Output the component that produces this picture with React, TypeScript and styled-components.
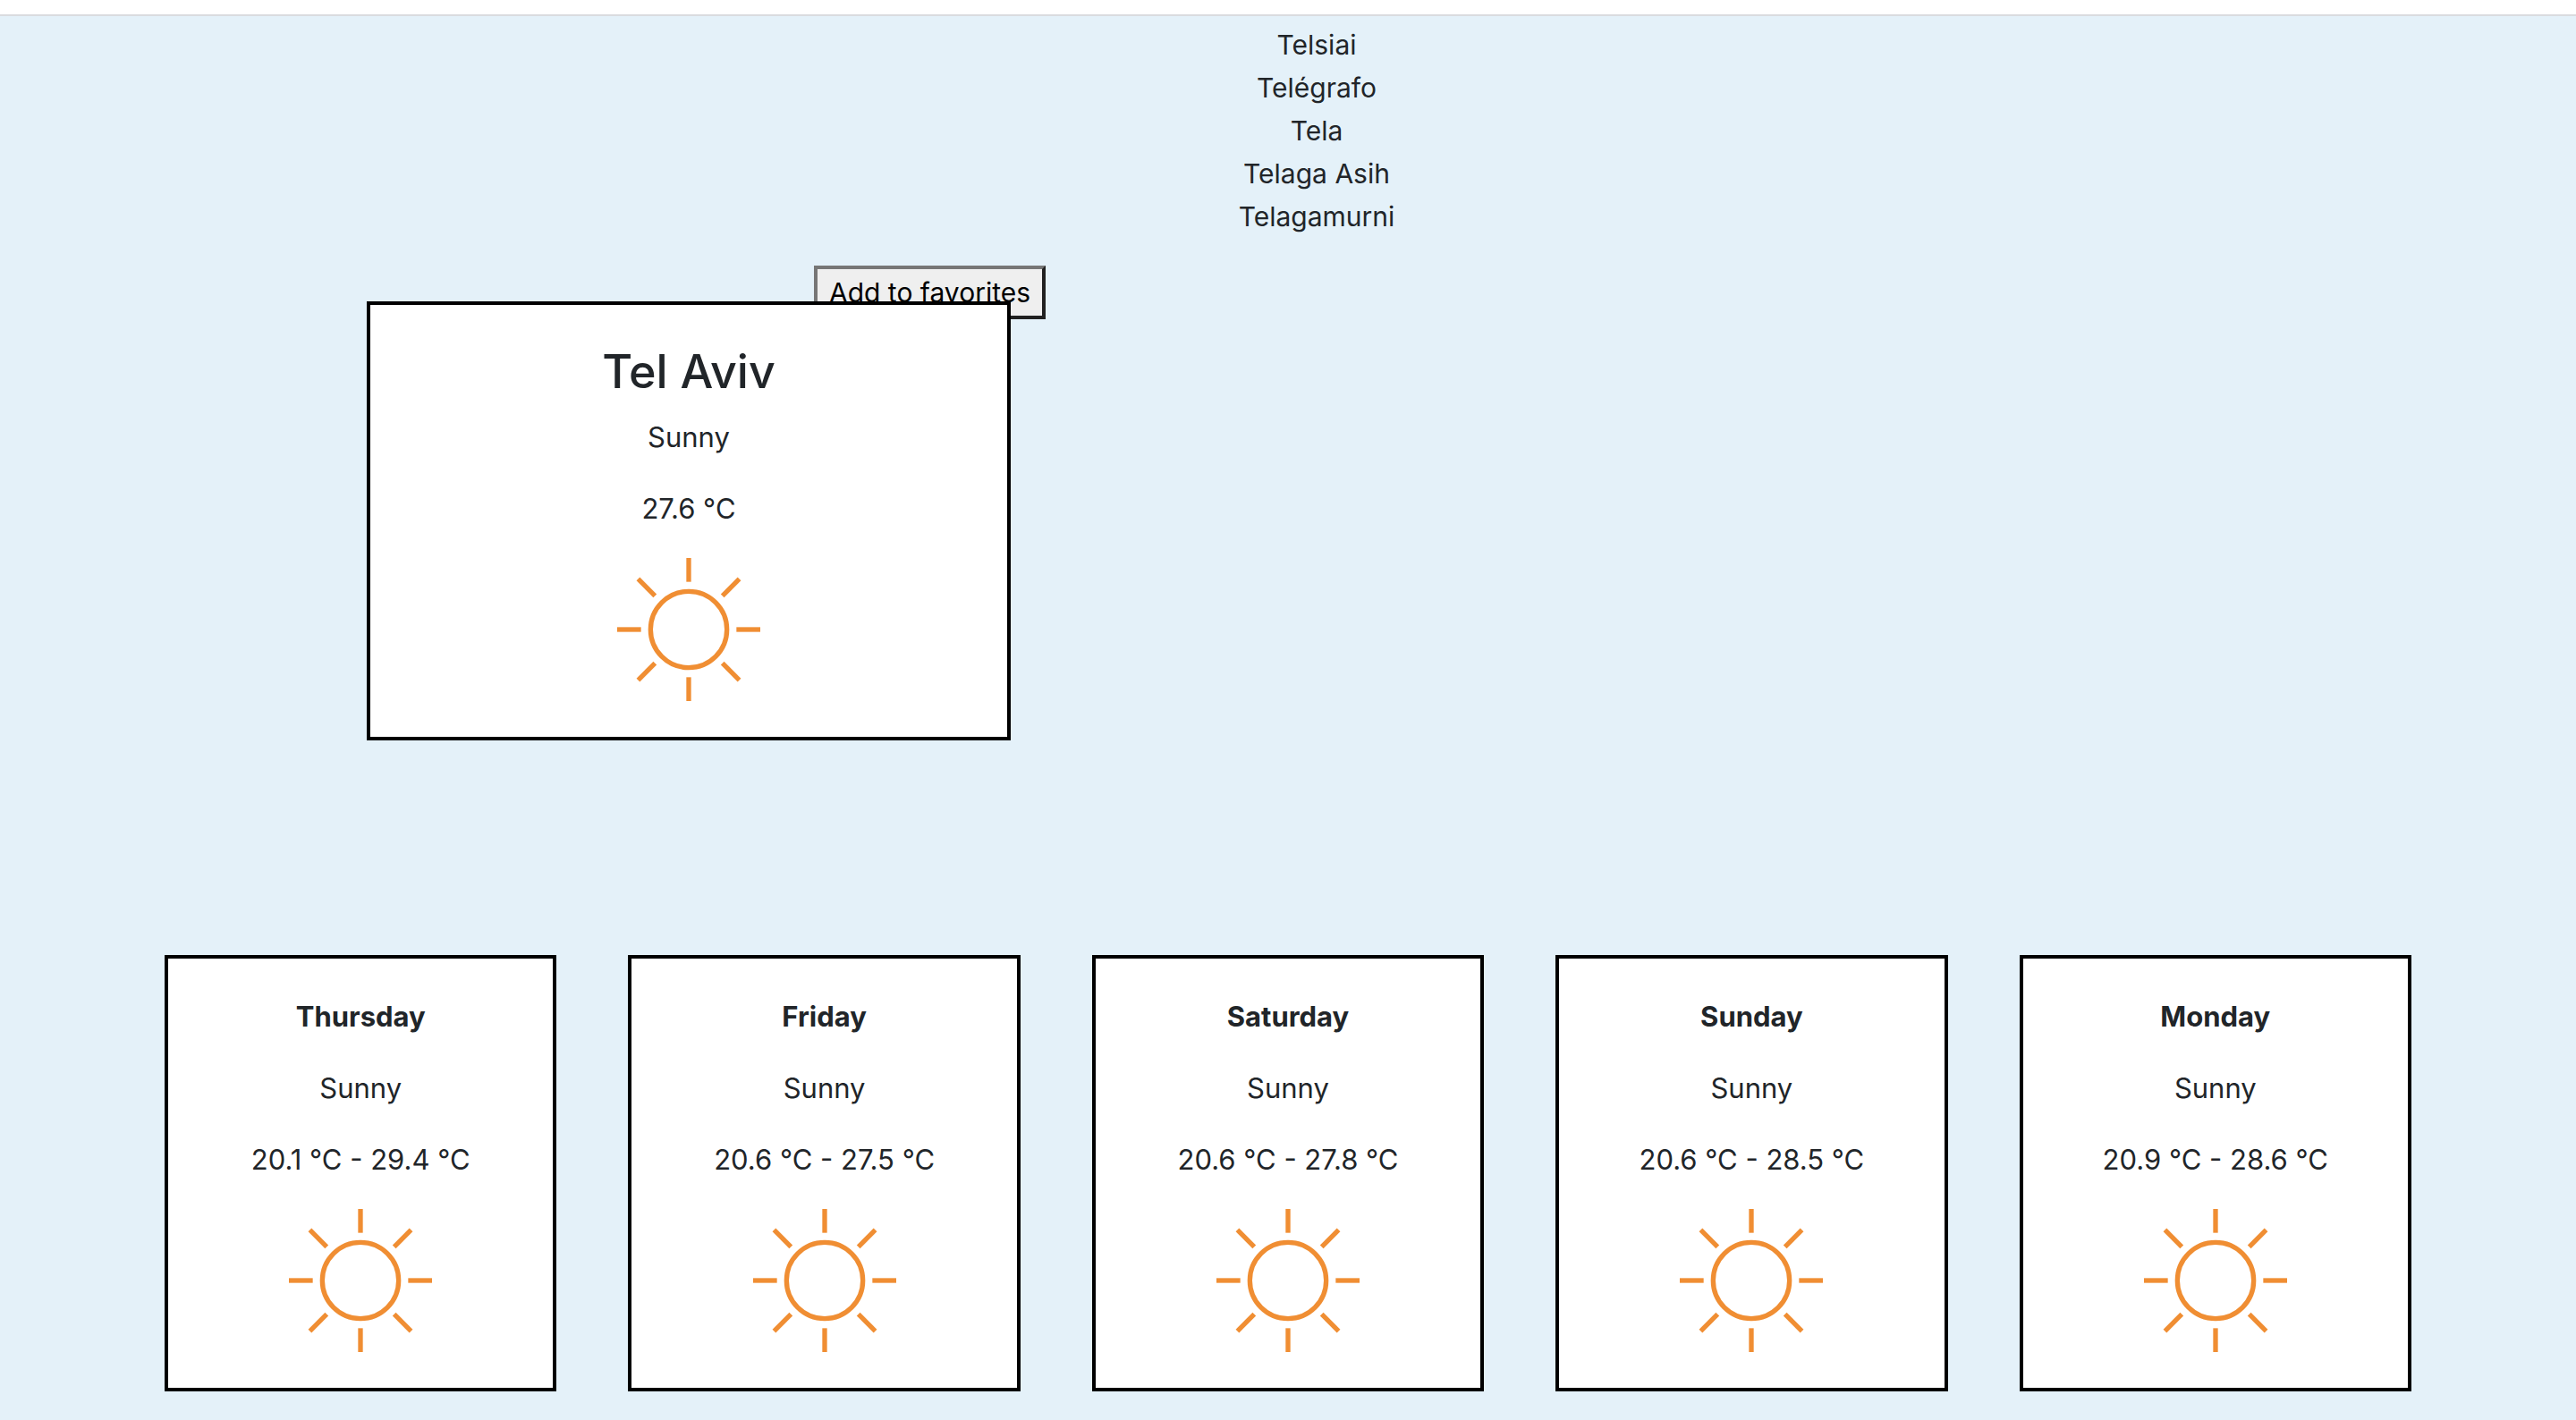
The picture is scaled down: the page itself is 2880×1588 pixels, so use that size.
import React from "react";
import styled, { createGlobalStyle } from "styled-components";

const GlobalStyle = createGlobalStyle`
  *, *::before, *::after { box-sizing: border-box; }
  body {
    margin: 0;
    background: #e4f1f9;
    color: #212529;
    font-family: Inter, "Liberation Sans", sans-serif;
    font-size: 30px;
    line-height: 48px;
  }
`;

const Page = styled.div`
  display: flex;
  flex-direction: column;
  min-height: 100vh;
`;

const TopBar = styled.header`
  height: 18px;
  background: #ffffff;
  border-bottom: 2px solid #dadcdf;
`;

const Main = styled.main`
  display: flex;
  flex-direction: column;
  padding: 8px 0 32px;
`;

const Suggestions = styled.ul`
  margin: 0 0 31px;
  padding: 0 0 0 64px;
  list-style: none;
  text-align: center;
`;

const Current = styled.section`
  display: flex;
  flex-direction: column;
  align-items: flex-start;
  padding-left: 410px;
  margin-bottom: 240px;
`;

const FavoriteButton = styled.button`
  margin: 0 0 0 500px;
  padding: 2px 13px;
  height: 60px;
  border: 4px solid;
  border-color: #767676 #212121 #212121 #767676;
  background: #efefef;
  color: #000000;
  font: inherit;
  cursor: pointer;
`;

const Card = styled.article`
  display: flex;
  flex-direction: column;
  align-items: center;
  padding: 40px 0;
  border: 4px solid #000000;
  background: #ffffff;
  font-size: 31px;
  line-height: 50px;
  text-align: center;
`;

const CurrentCard = styled(Card)`
  width: 25vw;
  margin-top: -20px;
`;

const City = styled.h2`
  margin: 0 0 13px;
  font-size: 52px;
  font-weight: 500;
  line-height: 70px;
`;

const Day = styled.h3`
  margin: 0 0 30px;
  font-size: inherit;
  font-weight: 700;
`;

const Detail = styled.p`
  margin: 0 0 30px;
`;

const Forecast = styled.section`
  display: grid;
  grid-template-columns: repeat(5, 1fr);
  gap: 80px;
  padding: 0 184px;
`;

const SunSvg = styled.svg`
  display: block;
  width: 160px;
  height: 160px;
  fill: none;
  stroke: #f08e33;
  stroke-width: 2;
`;

const rays = [0, 45, 90, 135, 180, 225, 270, 315];

function SunIcon() {
  return (
    <SunSvg viewBox="0 0 60 60" role="img" aria-label="Sunny">
      <circle cx="30" cy="30" r="16" />
      {rays.map((angle) => (
        <path key={angle} d="M30 0V10" transform={`rotate(${angle} 30 30)`} />
      ))}
    </SunSvg>
  );
}

const suggestions = ["Telsiai", "Telégrafo", "Tela", "Telaga Asih", "Telagamurni"];

const forecast = [
  { day: "Thursday", condition: "Sunny", min: 20.1, max: 29.4 },
  { day: "Friday", condition: "Sunny", min: 20.6, max: 27.5 },
  { day: "Saturday", condition: "Sunny", min: 20.6, max: 27.8 },
  { day: "Sunday", condition: "Sunny", min: 20.6, max: 28.5 },
  { day: "Monday", condition: "Sunny", min: 20.9, max: 28.6 },
];

export default function App() {
  return (
    <Page>
      <GlobalStyle />
      <TopBar />
      <Main>
        <Suggestions>
          {suggestions.map((name) => (
            <li key={name}>{name}</li>
          ))}
        </Suggestions>
        <Current>
          <FavoriteButton type="button">Add to favorites</FavoriteButton>
          <CurrentCard>
            <City>Tel Aviv</City>
            <Detail>Sunny</Detail>
            <Detail>27.6 °C</Detail>
            <SunIcon />
          </CurrentCard>
        </Current>
        <Forecast>
          {forecast.map(({ day, condition, min, max }) => (
            <Card key={day}>
              <Day>{day}</Day>
              <Detail>{condition}</Detail>
              <Detail>{`${min} °C - ${max} °C`}</Detail>
              <SunIcon />
            </Card>
          ))}
        </Forecast>
      </Main>
    </Page>
  );
}
